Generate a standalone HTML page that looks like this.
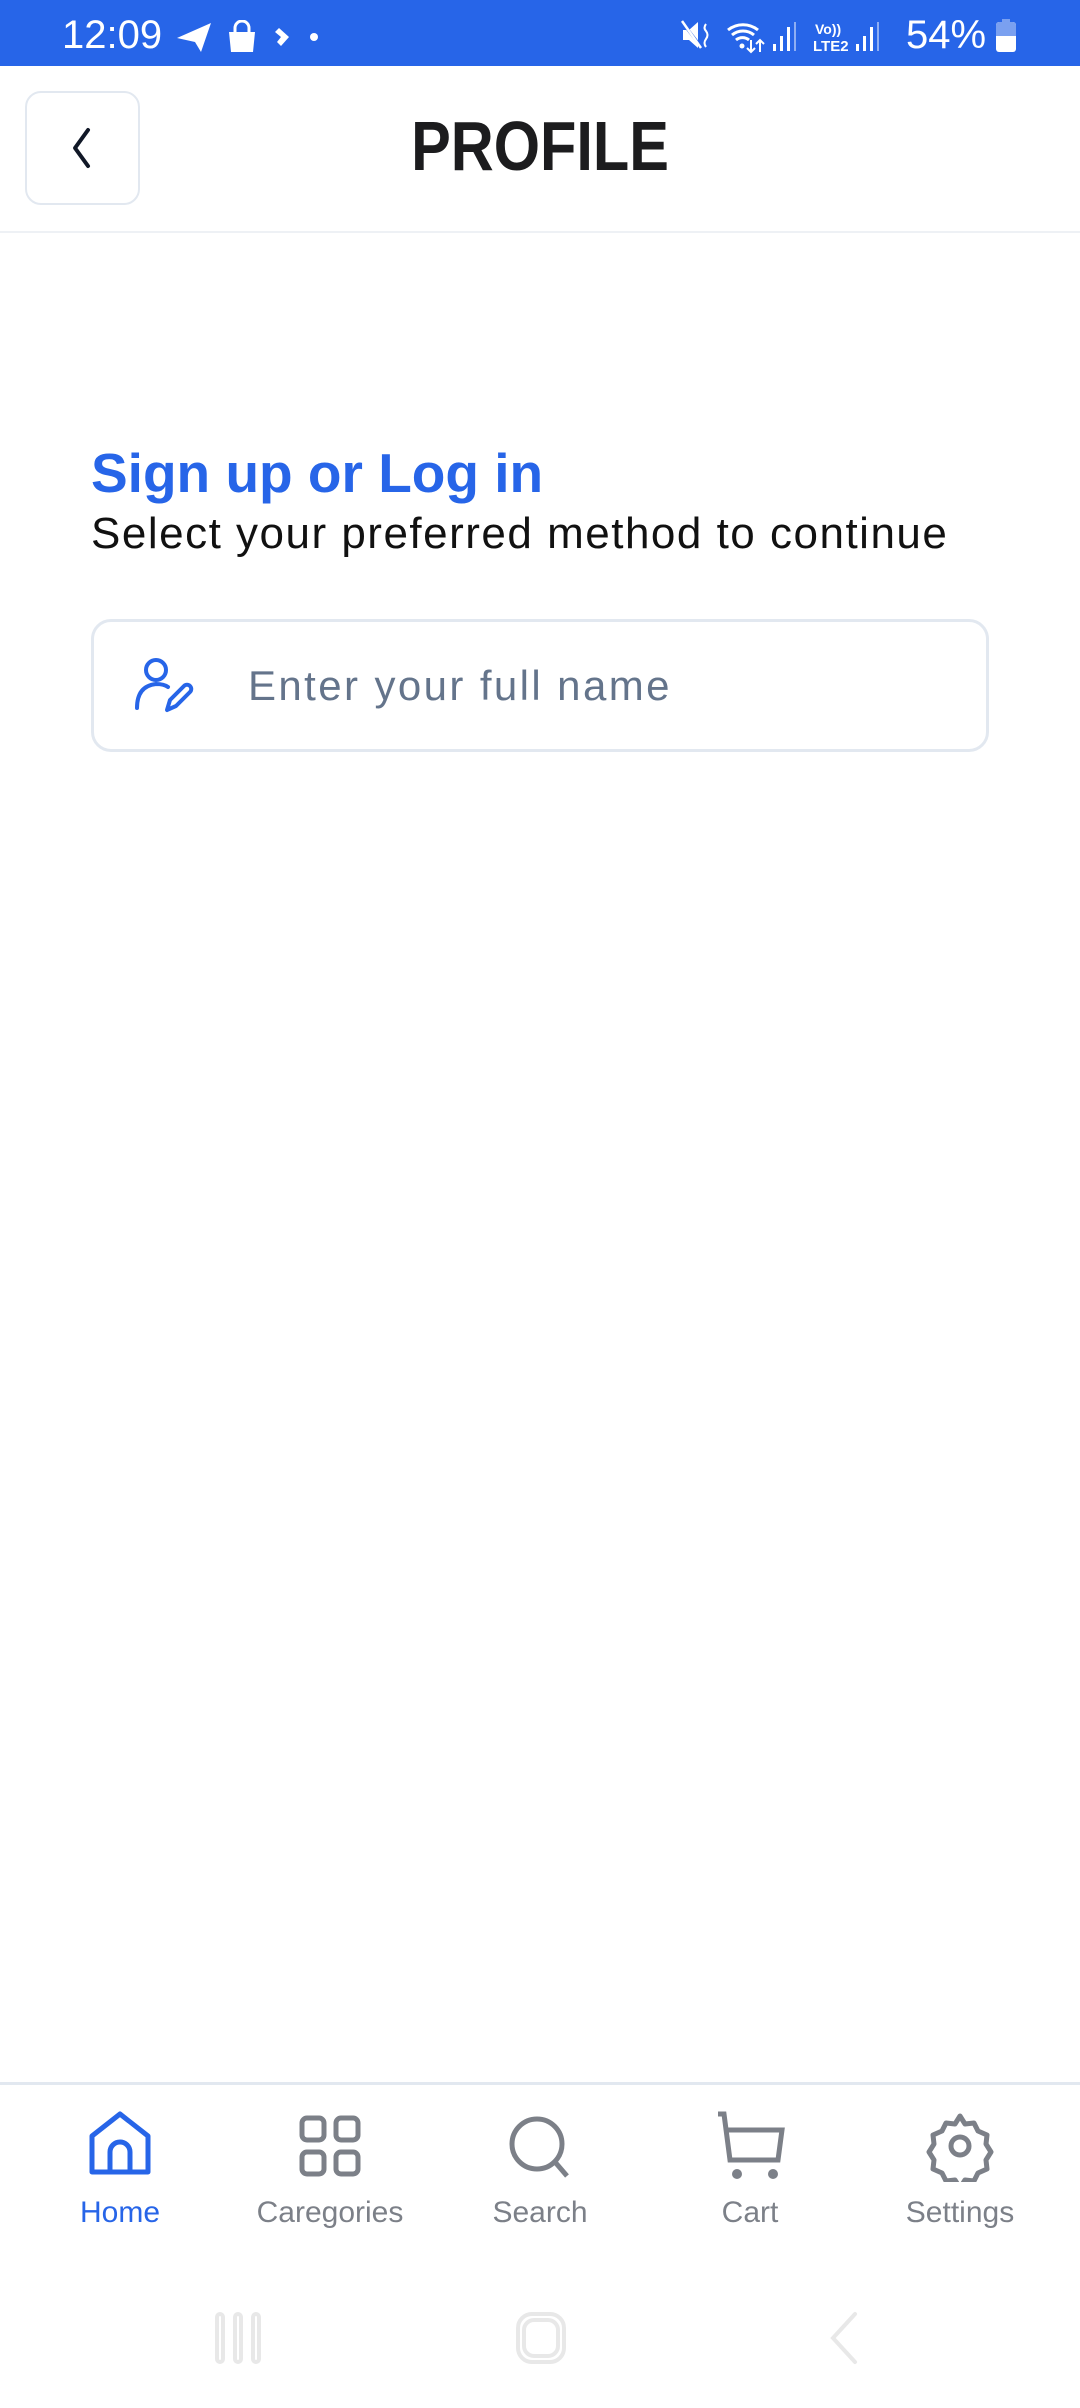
<!DOCTYPE html>
<html><head><meta charset="utf-8"><style>
*{margin:0;padding:0;box-sizing:border-box}
html,body{width:1080px;height:2408px;background:#fff;overflow:hidden;font-family:"Liberation Sans",sans-serif;position:relative}
.abs{position:absolute}
.sb{left:0;top:0;width:1080px;height:66px;background:#2765e8;color:#fff}
</style></head><body>
<div class="abs sb">
  <div class="abs" style="left:62px;top:13px;font-size:40px;color:#fff">12:09</div>
  <svg class="abs" style="left:175px;top:20px" width="150" height="34" viewBox="0 0 150 34">
    <path d="M2 18 L36 3 L26 32 L20 22 Z" fill="#fff"/>
    <path d="M54 12 h26 l-2 20 h-22 Z" fill="#fff"/><path d="M60 13 v-5 a7 7 0 0 1 14 0 v5" stroke="#fff" stroke-width="3" fill="none"/>
    <path d="M104 8 l10 9 l-8 9 l-4 -4 l4 -5 l-6 -5 Z" fill="#fff"/>
    <circle cx="164" cy="17" r="4" fill="#fff" transform="translate(-25 0)"/>
  </svg>
  <svg class="abs" style="left:680px;top:18px" width="340" height="36" viewBox="0 0 340 36">
    <path d="M3 12 h6 l9 -8 v26 l-9 -8 h-6 Z" fill="#fff"/><path d="M2 4 L22 30" stroke="#2765e8" stroke-width="3"/><path d="M2 3 L21 30" stroke="#fff" stroke-width="2.5"/>
    <path d="M26 6 q-3 4 0 7 q3 4 0 8 q-3 4 0 8" stroke="#fff" stroke-width="2" fill="none"/>
    <path d="M48 12 a24 24 0 0 1 30 0 M52 17 a17 17 0 0 1 22 0 M56 22 a10 10 0 0 1 13 0" stroke="#fff" stroke-width="3" fill="none"/>
    <circle cx="62" cy="28" r="2.5" fill="#fff"/><path d="M71 22 v12 M67 30 l4 4 l4 -4 M80 34 v-12 M76 26 l4 -4 l4 4" stroke="#fff" stroke-width="2" fill="none"/>
    <rect x="93" y="26" width="3" height="7" fill="#fff"/><rect x="100" y="18" width="3" height="15" fill="#fff"/><rect x="107" y="9" width="3" height="24" fill="#fff"/><rect x="114" y="4" width="2" height="29" fill="#8eaef3"/>
    <text x="135" y="16" font-size="14" font-weight="bold" fill="#fff" font-family="Liberation Sans">Vo))</text>
    <text x="133" y="33" font-size="15" font-weight="bold" fill="#fff" font-family="Liberation Sans">LTE2</text>
    <rect x="176" y="26" width="3" height="7" fill="#fff"/><rect x="183" y="18" width="3" height="15" fill="#fff"/><rect x="190" y="9" width="3" height="24" fill="#fff"/><rect x="197" y="4" width="2" height="29" fill="#8eaef3"/>
  </svg>
  <div class="abs" style="left:906px;top:13px;font-size:40px;color:#fff">54%</div>
  <div class="abs" style="left:996px;top:22px;width:20px;height:30px;border-radius:3px;background:#fff;overflow:hidden"><div style="height:14px;background:#7aa0f0"></div></div>
  <div class="abs" style="left:1002px;top:19px;width:8px;height:4px;background:#7aa0f0"></div>
</div>

<div class="abs" style="left:25px;top:91px;width:115px;height:114px;border:2px solid #e2e8f0;border-radius:16px"></div>
<svg class="abs" style="left:62px;top:125px" width="40" height="46" viewBox="0 0 40 46"><path d="M26 5 L13 23 L26 41" stroke="#111827" stroke-width="4" fill="none" stroke-linecap="round" stroke-linejoin="round"/></svg>
<div class="abs" style="left:0;top:106px;width:1080px;text-align:center;font-size:70px;font-weight:bold;color:#1c1c1e;transform:scaleX(0.85);transform-origin:540px 0">PROFILE</div>
<div class="abs" style="left:0;top:231px;width:1080px;height:2px;background:#eef1f5"></div>

<div class="abs" style="left:91px;top:441px;font-size:55px;font-weight:bold;color:#2765e8">Sign up or Log in</div>
<div class="abs" style="left:91px;top:509px;font-size:44px;color:#111;letter-spacing:1.5px">Select your preferred method to continue</div>

<div class="abs" style="left:91px;top:619px;width:898px;height:133px;border:3px solid #e2e8f0;border-radius:20px"></div>
<svg class="abs" style="left:132px;top:656px" width="62" height="58" viewBox="0 0 62 58">
  <circle cx="24" cy="14" r="10" stroke="#2765e8" stroke-width="4" fill="none"/>
  <path d="M5 52 q0 -22 19 -24 q8 0 12 3" stroke="#2765e8" stroke-width="4" fill="none" stroke-linecap="round"/>
  <path d="M35 54 l3 -10 l14 -14 a4 4 0 0 1 6 6 l-14 14 Z" stroke="#2765e8" stroke-width="4" fill="none" stroke-linejoin="round"/>
</svg>
<div class="abs" style="left:248px;top:662px;font-size:42px;color:#64748b;letter-spacing:2.4px">Enter your full name</div>

<div class="abs" style="left:0;top:2082px;width:1080px;height:3px;background:#e2e8f0"></div>
<svg class="abs" style="left:0;top:2110px" width="1080" height="72" viewBox="0 0 1080 72">
  <path d="M92 62 V26 L120 4 L148 26 V62 Z" stroke="#2765e8" stroke-width="5" fill="none" stroke-linejoin="round"/>
  <path d="M110 62 V42 a10 10 0 0 1 20 0 V62" stroke="#2765e8" stroke-width="5" fill="none"/>
  <g stroke="#7c8088" stroke-width="5" fill="none">
    <rect x="302" y="8" width="22" height="22" rx="5"/><rect x="336" y="8" width="22" height="22" rx="5"/>
    <rect x="302" y="42" width="22" height="22" rx="5"/><rect x="336" y="42" width="22" height="22" rx="5"/>
    <circle cx="537" cy="34" r="25"/><path d="M555 52 L567 66"/>
    <path d="M718 4 h6 l6 46 h48 l4 -30 h-54"/>
    <path d="M960 6 l5 8 l9 -1 l4 8 l9 4 l-1 9 l5 8 l-5 8 l1 9 l-9 4 l-4 8 l-9 -1 l-5 8 l-5 -8 l-9 1 l-4 -8 l-9 -4 l1 -9 l-5 -8 l5 -8 l-1 -9 l9 -4 l4 -8 l9 1 Z" stroke-linejoin="round"/>
    <circle cx="960" cy="36" r="9"/>
  </g>
  <circle cx="737" cy="64" r="5" fill="#7c8088"/><circle cx="773" cy="64" r="5" fill="#7c8088"/>
</svg>
<div class="abs" style="top:2196px;left:60px;width:120px;text-align:center;font-size:30px;color:#2765e8">Home</div>
<div class="abs" style="top:2196px;left:230px;width:200px;text-align:center;font-size:30px;color:#7c8088">Caregories</div>
<div class="abs" style="top:2196px;left:440px;width:200px;text-align:center;font-size:30px;color:#7c8088">Search</div>
<div class="abs" style="top:2196px;left:650px;width:200px;text-align:center;font-size:30px;color:#7c8088">Cart</div>
<div class="abs" style="top:2196px;left:860px;width:200px;text-align:center;font-size:30px;color:#7c8088">Settings</div>

<svg class="abs" style="left:0;top:2300px" width="1080" height="80" viewBox="0 0 1080 80">
  <g stroke="#e8e8e8" stroke-width="4" fill="none" stroke-linecap="round">
    <rect x="217" y="14" width="6" height="48" rx="3"/><rect x="235" y="14" width="6" height="48" rx="3"/><rect x="253" y="14" width="6" height="48" rx="3"/>
    <rect x="518" y="14" width="46" height="48" rx="14"/><rect x="524" y="20" width="34" height="36" rx="10"/>
    <path d="M855 14 L833 38 L855 62"/>
  </g>
</svg>
</body></html>
